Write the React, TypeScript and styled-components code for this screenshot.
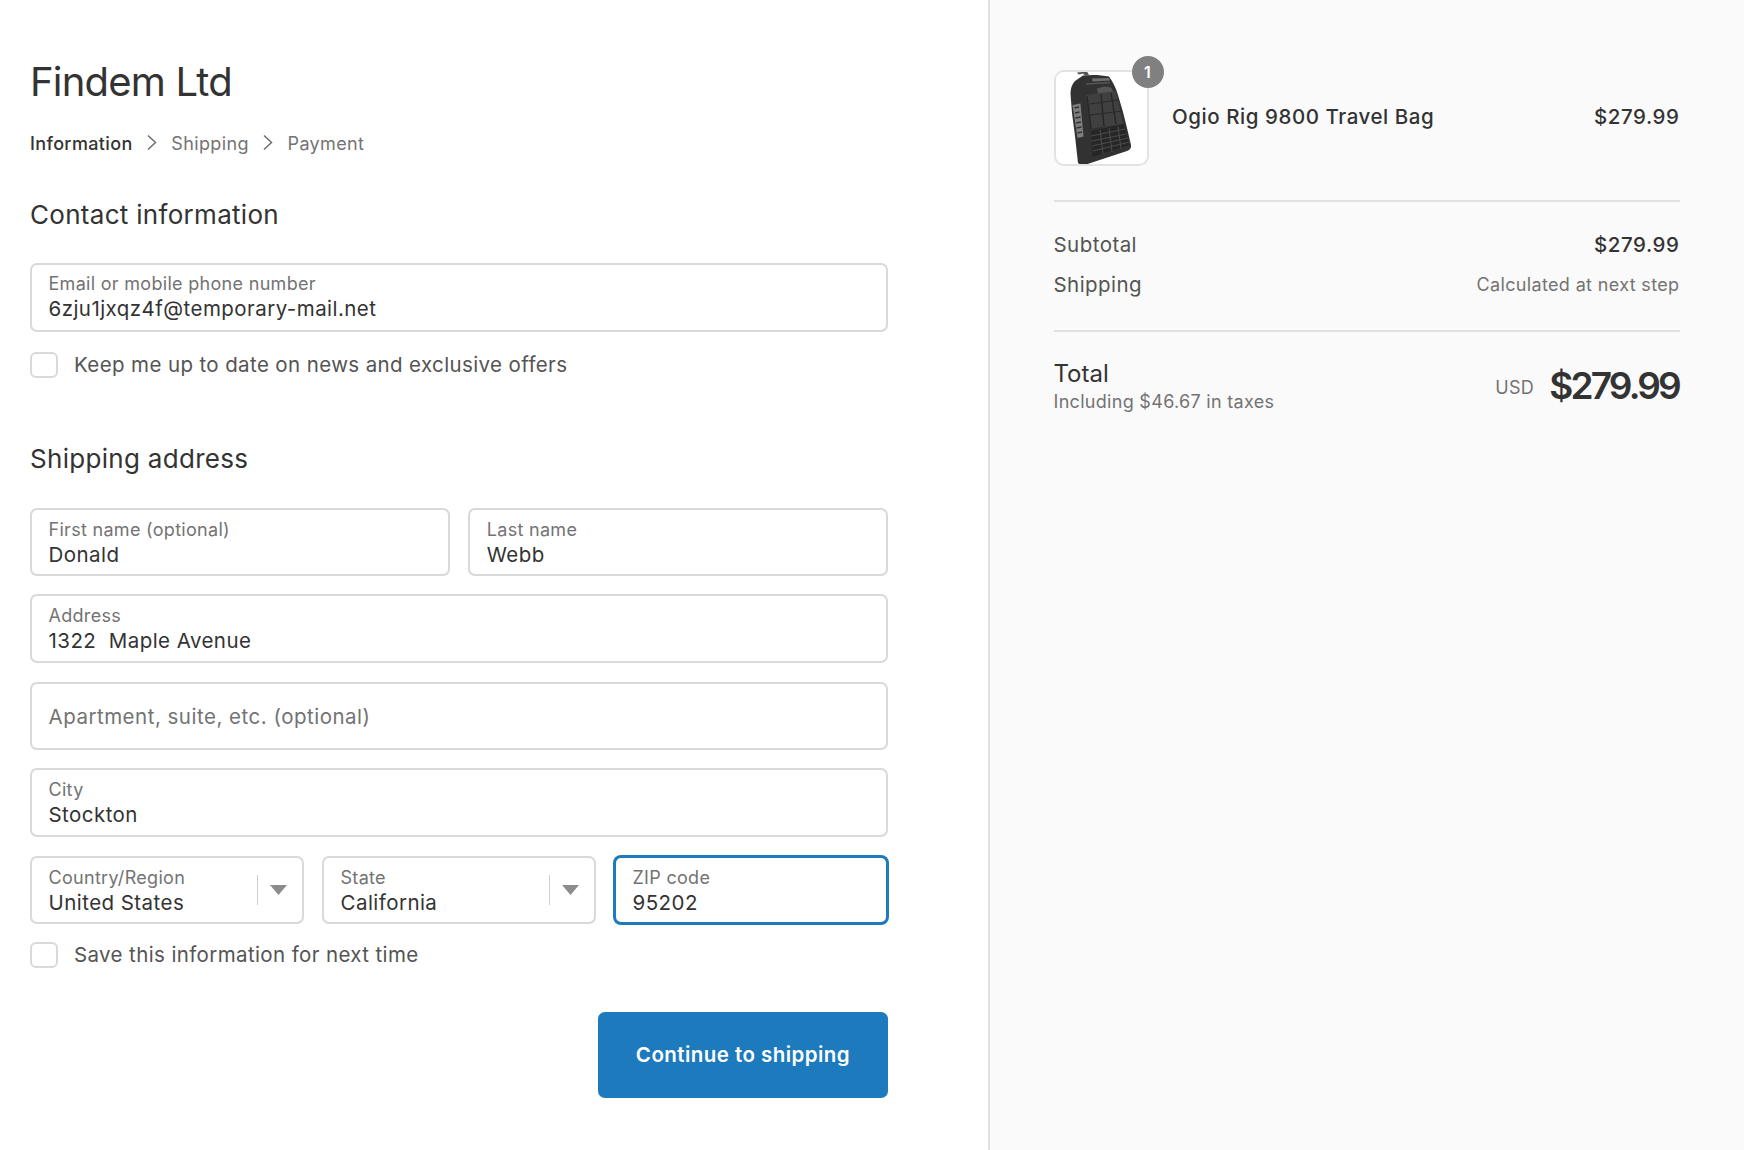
import React from "react";
import styled, { createGlobalStyle } from "styled-components";

const Global = createGlobalStyle`
  html, body { margin: 0; padding: 0; background: #fff; }
  body { font-family: Inter, "Liberation Sans", sans-serif; color: #333; -webkit-font-smoothing: antialiased; }
`;

const Page = styled.div`
  display: grid;
  grid-template-columns: 988px 1fr;
  width: 1744px;
  height: 1150px;
  overflow: hidden;
`;

const Main = styled.main`
  padding: 57px 100px 0 30px;
  display: flex;
  flex-direction: column;
`;

const Title = styled.h1`
  margin: 0;
  font-size: 40px;
  line-height: 50px;
  font-weight: 400;
  letter-spacing: -0.8px;
  color: #333;
`;

const Crumbs = styled.nav`
  margin-top: 24.5px;
  display: flex;
  align-items: center;
  height: 24px;
  gap: 14.4px;
  font-size: 18px;
  letter-spacing: 0.35px;
  color: #737373;
  svg {
    margin-top: -3px;
  }
`;

const Crumb = styled.span<{ $active?: boolean }>`
  color: ${(p) => (p.$active ? "#333" : "#737373")};
  font-weight: ${(p) => (p.$active ? 500 : 400)};
`;

const Section = styled.h2<{ $top: number }>`
  margin: ${(p) => p.$top}px 0 0;
  font-size: 26px;
  line-height: 30px;
  font-weight: 400;
  letter-spacing: 0.3px;
  color: #333;
`;

const Stack = styled.div<{ $top: number }>`
  margin-top: ${(p) => p.$top}px;
  display: flex;
  flex-direction: column;
  gap: 18.5px;
`;

const Row = styled.div<{ $cols: string }>`
  display: grid;
  grid-template-columns: ${(p) => p.$cols};
  gap: 18.5px;
`;

const Field = styled.div<{ $h?: number; $pad?: number; $focus?: boolean }>`
  position: relative;
  box-sizing: border-box;
  height: ${(p) => p.$h ?? 69}px;
  padding: ${(p) => p.$pad ?? 3}px 16.5px 0;
  display: flex;
  flex-direction: column;
  justify-content: center;
  background: #fff;
  border: 2px solid ${(p) => (p.$focus ? "#1c7abd" : "#d9d9d9")};
  box-shadow: ${(p) => (p.$focus ? "0 0 0 1px #1c7abd" : "none")};
  border-radius: 7px;
`;

const Label = styled.span`
  font-size: 18px;
  line-height: 22px;
  letter-spacing: 0.3px;
  color: #737373;
`;

const Value = styled.span`
  font-size: 20.5px;
  line-height: 27.5px;
  letter-spacing: 0.45px;
  color: #333;
  white-space: pre;
`;

const Placeholder = styled.span`
  margin-top: -2px;
  font-size: 20.5px;
  line-height: 27px;
  letter-spacing: 0.5px;
  color: #737373;
`;

const Caret = styled.div`
  position: absolute;
  right: 15px;
  top: 17px;
  width: 29px;
  height: 30px;
  border-left: 1px solid #cfcfcf;
  display: flex;
  align-items: center;
  justify-content: flex-end;
`;

const Check = styled.label<{ $top: number }>`
  margin-top: ${(p) => p.$top}px;
  display: flex;
  align-items: center;
  gap: 16px;
  height: 26px;
  font-size: 20.5px;
  letter-spacing: 0.38px;
  color: #545454;
`;

const Box = styled.span`
  box-sizing: border-box;
  width: 28px;
  height: 26px;
  background: #fff;
  border: 2px solid #d9d9d9;
  border-radius: 6px;
`;

const Actions = styled.div`
  margin-top: 44px;
  display: flex;
  justify-content: flex-end;
`;

const Button = styled.button`
  width: 290px;
  height: 86px;
  border: none;
  border-radius: 7px;
  background: #1c7abd;
  color: #fff;
  font-family: inherit;
  font-size: 20.5px;
  font-weight: 600;
  letter-spacing: 0.45px;
`;

const Aside = styled.aside`
  box-sizing: border-box;
  background: #fafafa;
  border-left: 2px solid #e1e1e1;
  padding: 70px 64px 0 63.5px;
  display: flex;
  flex-direction: column;
`;

const Item = styled.div`
  display: flex;
  align-items: center;
  height: 96px;
`;

const Thumb = styled.div`
  position: relative;
  box-sizing: border-box;
  width: 95.5px;
  height: 96px;
  flex: none;
  background: #fff;
  border: 2px solid #e3e3e3;
  border-radius: 10px;
  svg {
    display: block;
  }
`;

const Badge = styled.span`
  position: absolute;
  top: -16px;
  right: -16.5px;
  width: 32px;
  height: 32px;
  border-radius: 50%;
  background: #808080;
  color: #fff;
  font-size: 16px;
  font-weight: 600;
  display: flex;
  align-items: center;
  justify-content: center;
`;

const ItemName = styled.span`
  flex: 1;
  margin: 0 0 3px 23px;
  font-size: 20.5px;
  font-weight: 500;
  letter-spacing: 0.55px;
  color: #333;
`;

const Price = styled.span`
  font-size: 20.5px;
  font-weight: 500;
  letter-spacing: 0.55px;
  color: #333;
  margin-right: 0.5px;
`;

const ItemPrice = styled(Price)`
  margin-bottom: 3px;
`;

const Rule = styled.hr<{ $top: number }>`
  margin: ${(p) => p.$top}px 0 0;
  border: none;
  height: 2px;
  background: #e1e1e1;
`;

const Line = styled.div<{ $top: number }>`
  margin-top: ${(p) => p.$top}px;
  height: 30px;
  display: flex;
  align-items: center;
  justify-content: space-between;
`;

const LineLabel = styled.span`
  font-size: 20.5px;
  letter-spacing: 0.45px;
  color: #545454;
`;

const Note = styled.span`
  font-size: 18px;
  letter-spacing: 0.35px;
  color: #737373;
  margin-right: 0.5px;
`;

const TotalRow = styled.div`
  margin-top: 27px;
  display: flex;
  justify-content: space-between;
  align-items: flex-start;
`;

const TotalLeft = styled.div`
  display: flex;
  flex-direction: column;
`;

const TotalLabel = styled.span`
  font-size: 24px;
  line-height: 30px;
  color: #333;
`;

const TotalNote = styled.span`
  font-size: 18px;
  line-height: 25px;
  letter-spacing: 0.3px;
  color: #737373;
`;

const TotalRight = styled.div`
  display: flex;
  align-items: center;
  gap: 15px;
  height: 50px;
  margin: 1px 1px 0 0;
`;

const Currency = styled.span`
  font-size: 18px;
  letter-spacing: 0.3px;
  color: #737373;
  margin-top: 5px;
`;

const Grand = styled.span`
  font-size: 37px;
  font-weight: 600;
  letter-spacing: -2.8px;
  color: #333;
`;

const ChevronIcon = () => (
  <svg width="10" height="17" viewBox="0 0 10 17" fill="none">
    <path d="M1 1.5 8.5 8.5 1 15.5" stroke="#6e6e6e" strokeWidth="1.5" />
  </svg>
);

const ArrowIcon = () => (
  <svg width="17" height="10" viewBox="0 0 17 10">
    <path d="M0 0h17L8.5 10z" fill="#8c8c8c" />
  </svg>
);

const BagIcon = () => (
  <svg width="91" height="92" viewBox="2 2 91 92">
    <defs>
      <filter id="soft" x="-5%" y="-5%" width="110%" height="110%">
        <feGaussianBlur stdDeviation="0.6" />
      </filter>
    </defs>
    <g filter="url(#soft)">
      <path d="M23 2.500 33 1.500 35 5 31 5.500 29 3.500 24.500 4.500z" fill="#555" />
      <path d="M29 5.500C38 4.500 48 5 55 6.500 59 12 62 18 64 25L69 42 73 58 77 75C77.500 78 76 80 73 81L32 94.500 27 95 24 93C23 84 22 75 21 66L18 43 16.500 24C16.500 18 18 14 21 11z" fill="#333" />
      <path d="M18.500 35l8-1.500 3 33-6 1.500z" fill="#7e7e7e" />
      <path d="M20.500 38l4.500-1M21 43l4.500-1M21.500 48l5-1M22 53l5-1M22.500 58l5-1M23.500 63l4.500-1" stroke="#333" strokeWidth="1.300" />
      <path d="M38 8.500l17-.5 1 2.500-17.500 1z" fill="#707070" />
      <path d="M32 14l24-1.500" stroke="#555" strokeWidth="1.500" />
      <path d="M43 18.500c5-2 10-2 14-1l3 5-16 1.500z" fill="#555" />
      <path d="M32 25l30-4 7 33-32 4.500z" fill="#3f3f3f" />
      <path d="M33 26l4 32M47 24l3 32M57 23l5 31" stroke="#262626" strokeWidth="1.300" fill="none" />
      <path d="M35 34l30-4M36 45l32-4" stroke="#2b2b2b" strokeWidth="1" fill="none" />
      <path d="M37 61l33-7 5.500 21-37.500 12z" fill="#262626" />
      <path d="M37 66l34-7M37.500 71l35-7M38 76l36-8M38.500 81l37-9M46 60l3 24M55 58l3 24M64 56l3 23" stroke="#4a4a4a" strokeWidth="1.100" fill="none" />
    </g>
  </svg>
);

const SelectField = ({ label, value }: { label: string; value: string }) => (
  <Field $h={68} $pad={5}>
    <Label>{label}</Label>
    <Value>{value}</Value>
    <Caret>
      <ArrowIcon />
    </Caret>
  </Field>
);

const TextField = ({ label, value, h, pad }: { label: string; value: string; h?: number; pad?: number }) => (
  <Field $h={h} $pad={pad}>
    <Label>{label}</Label>
    <Value>{value}</Value>
  </Field>
);

export default function App() {
  return (
    <Page>
      <Global />
      <Main>
        <Title>Findem Ltd</Title>
        <Crumbs>
          <Crumb $active>Information</Crumb>
          <ChevronIcon />
          <Crumb>Shipping</Crumb>
          <ChevronIcon />
          <Crumb>Payment</Crumb>
        </Crumbs>
        <Section $top={44.5}>Contact information</Section>
        <Stack $top={32.5}>
          <TextField pad={1} label="Email or mobile phone number" value="6zju1jxqz4f@temporary-mail.net" />
        </Stack>
        <Check $top={20}>
          <Box />
          Keep me up to date on news and exclusive offers
        </Check>
        <Section $top={66}>Shipping address</Section>
        <Stack $top={34}>
          <Row $cols="1fr 1fr">
            <TextField h={68} pad={5} label="First name (optional)" value="Donald" />
            <TextField h={68} pad={5} label="Last name" value="Webb" />
          </Row>
          <TextField label="Address" value="1322  Maple Avenue" />
          <Field $h={68}>
            <Placeholder>Apartment, suite, etc. (optional)</Placeholder>
          </Field>
          <TextField label="City" value="Stockton" />
          <Row $cols="273.5px 273.5px 1fr">
            <SelectField label="Country/Region" value="United States" />
            <SelectField label="State" value="California" />
            <Field $h={68} $pad={5} $focus>
              <Label>ZIP code</Label>
              <Value>95202</Value>
            </Field>
          </Row>
        </Stack>
        <Check $top={18}>
          <Box />
          Save this information for next time
        </Check>
        <Actions>
          <Button>Continue to shipping</Button>
        </Actions>
      </Main>
      <Aside>
        <Item>
          <Thumb>
            <BagIcon />
            <Badge>1</Badge>
          </Thumb>
          <ItemName>Ogio Rig 9800 Travel Bag</ItemName>
          <ItemPrice>$279.99</ItemPrice>
        </Item>
        <Rule $top={34} />
        <Line $top={27}>
          <LineLabel>Subtotal</LineLabel>
          <Price>$279.99</Price>
        </Line>
        <Line $top={10}>
          <LineLabel>Shipping</LineLabel>
          <Note>Calculated at next step</Note>
        </Line>
        <Rule $top={31} />
        <TotalRow>
          <TotalLeft>
            <TotalLabel>Total</TotalLabel>
            <TotalNote>Including $46.67 in taxes</TotalNote>
          </TotalLeft>
          <TotalRight>
            <Currency>USD</Currency>
            <Grand>$279.99</Grand>
          </TotalRight>
        </TotalRow>
      </Aside>
    </Page>
  );
}
